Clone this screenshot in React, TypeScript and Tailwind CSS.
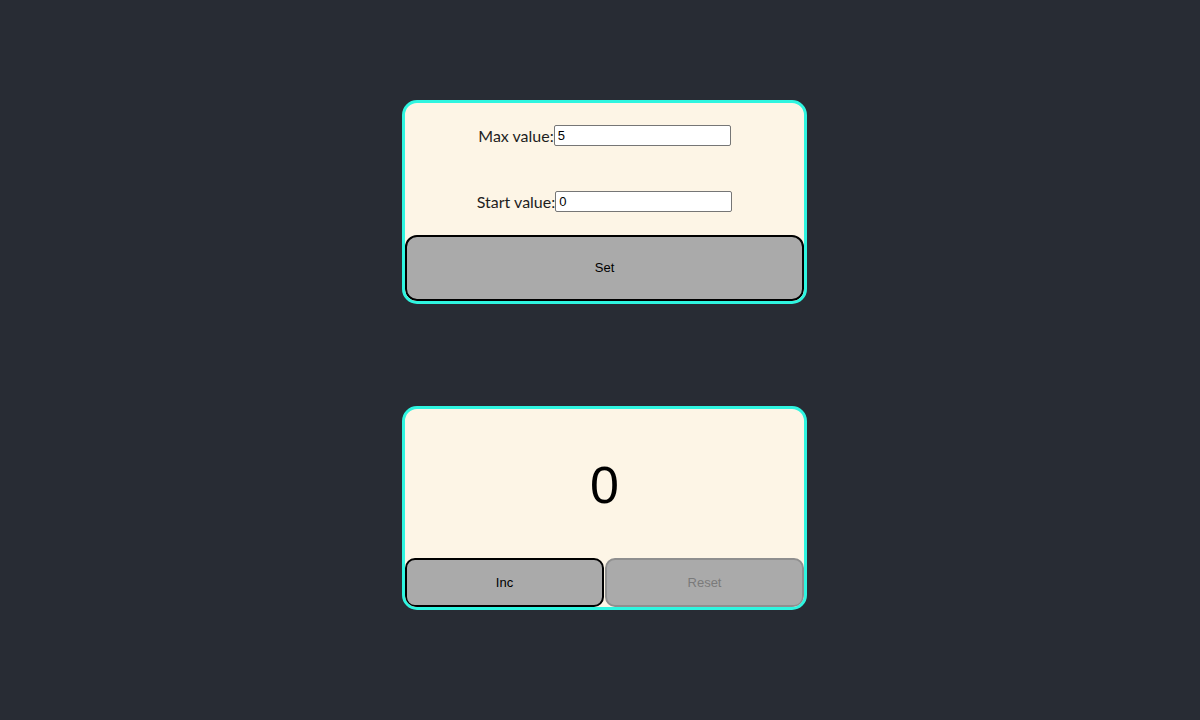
import React, { useState } from "react";

// Two stacked cards: settings (max/start) and the counter itself.
function Field({ label, value }: { label: string; value: number }) {
  return (
    <div className="flex h-[21px] items-center justify-center">
      <span className="text-[16px] text-[#1e1e1e] [font-family:Lato,'Noto_Sans',sans-serif]">{label}</span>
      <input
        type="number"
        defaultValue={value}
        className="h-[21px] w-[177px] rounded-[2px] border border-[#767676] bg-white px-[3px] text-[13px] text-black outline-none [font-family:'Liberation_Sans',Arial,sans-serif] [appearance:textfield]"
      />
    </div>
  );
}

export default function App() {
  const [count, setCount] = useState(0);
  const max = 5;

  return (
    <div className="flex min-h-screen flex-col items-center bg-[#282c34] pl-[9px] pt-[100px] [font-family:'Liberation_Sans',Arial,sans-serif]">
      <div className="flex h-[204px] w-[405px] flex-col overflow-hidden rounded-[15px] border-[3px] border-[#2ff5e0] bg-[#fdf5e6]">
        <div className="pt-[22px]">
          <Field label="Max value:" value={5} />
        </div>
        <div className="mt-[45px]">
          <Field label="Start value:" value={0} />
        </div>
        <button className="mt-[23px] h-[66px] w-full rounded-[12px] border-2 border-black bg-[#aaaaaa] text-[13px] text-black">
          Set
        </button>
      </div>

      <div className="mt-[102px] flex h-[204px] w-[405px] flex-col overflow-hidden rounded-[15px] border-[3px] border-[#2ff5e0] bg-[#fdf5e6]">
        <div className="flex flex-1 items-center justify-center pt-[3px] text-[52px] leading-none text-black">
          {count}
        </div>
        <div className="flex h-[49px]">
          <button
            onClick={() => setCount((c) => Math.min(max, c + 1))}
            className="flex-1 rounded-[10px] border-2 border-black bg-[#aaaaaa] text-[13px] text-black"
          >
            Inc
          </button>
          <button
            disabled={count === 0}
            onClick={() => setCount(0)}
            className="ml-px flex-1 rounded-[10px] border-2 border-[#8f8f8f] bg-[#aaaaaa] text-[13px] text-[#7a7a7a]"
          >
            Reset
          </button>
        </div>
      </div>
    </div>
  );
}
